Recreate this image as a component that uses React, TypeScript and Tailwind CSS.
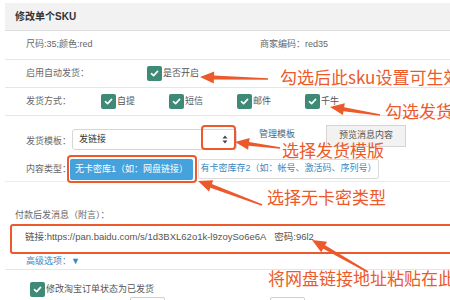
import React from "react";

const ORANGE = "#ec5a2c";

function Check() {
  return (
    <span className="inline-flex h-[15px] w-[15px] shrink-0 items-center justify-center rounded-[2px] bg-[#3f8a77]">
      <svg width="9" height="9" viewBox="0 0 10 10">
        <path
          d="M1.6 5.2 L4 7.4 L8.4 2.6"
          stroke="white"
          strokeWidth="1.8"
          fill="none"
          strokeLinecap="round"
          strokeLinejoin="round"
        />
      </svg>
    </span>
  );
}

// tip at (tx, ty), tail at (fx, fy)
function Arrow({ tx, ty, fx, fy }: { tx: number; ty: number; fx: number; fy: number }) {
  const dx = tx - fx;
  const dy = ty - fy;
  const len = Math.hypot(dx, dy);
  const ux = dx / len;
  const uy = dy / len;
  const px = -uy;
  const py = ux;
  const head = 14;
  const hw = 6;
  const bx = tx - ux * head;
  const by = ty - uy * head;
  const p = (x: number, y: number) => `${x.toFixed(1)},${y.toFixed(1)}`;
  const pts = [
    p(fx + px * 0.8, fy + py * 0.8),
    p(bx + px * 2, by + py * 2),
    p(bx + px * hw, by + py * hw),
    p(tx, ty),
    p(bx - px * hw, by - py * hw),
    p(bx - px * 2, by - py * 2),
    p(fx - px * 0.8, fy - py * 0.8),
  ].join(" ");
  return <polygon points={pts} fill={ORANGE} />;
}

function Note({ left, top, children }: { left: number; top: number; children: React.ReactNode }) {
  return (
    <span
      className="absolute whitespace-nowrap text-[17px] leading-none text-[#ec5a2c]"
      style={{ left, top, fontFamily: '"Noto Sans CJK SC", sans-serif' }}
    >
      {children}
    </span>
  );
}

export default function App() {
  return (
    <div
      className="relative h-[300px] w-[450px] overflow-hidden bg-white text-[9px] text-[#666]"
      style={{ fontFamily: '"Liberation Sans", "Noto Sans CJK SC", sans-serif' }}
    >
      <div className="pl-[5px] pt-[3px]">
        {/* header */}
        <div className="flex h-[28px] items-center border-b border-[#dedede] bg-[#f2f2f2] pl-[10px] text-[10px] font-bold text-[#333]">
          修改单个SKU
        </div>

        <div className="flex h-[29px] items-center border-b border-[#e6e6e6] pl-[21px]">
          <span className="w-[234px]">尺码:35;颜色:red</span>
          <span>商家编码：red35</span>
        </div>

        <div className="flex h-[28px] items-center border-b border-[#e6e6e6] pl-[21px]">
          <span className="w-[121px]">启用自动发货：</span>
          <Check />
          <span className="ml-[1px] text-[#555]">是否开启</span>
        </div>

        <div className="flex h-[28px] items-center border-b border-[#e6e6e6] pl-[21px]">
          <span className="w-[75px]">发货方式：</span>
          {["自提", "短信", "邮件", "千牛"].map((t) => (
            <span key={t} className="flex w-[68px] items-center">
              <Check />
              <span className="ml-[1px] text-[#555]">{t}</span>
            </span>
          ))}
        </div>

        {/* template */}
        <div className="flex h-[38px] items-start pl-[21px]">
          <span className="mt-[19px] w-[46px] shrink-0 whitespace-nowrap">发货模板：</span>
          <div className="mt-[13px] flex h-[21px] w-[165px] shrink-0 items-center justify-between rounded-[3px] border border-[#d6d6d6] bg-white pl-[6px] pr-[8px] text-[#333]">
            <span>发链接</span>
            <svg width="6" height="9" viewBox="0 0 6 9">
              <path d="M3 0.5 L5.5 3.5 H0.5 Z M3 8.5 L5.5 5.5 H0.5 Z" fill="#444" />
            </svg>
          </div>
          <span className="ml-[22px] mt-[12px] w-[36px] shrink-0 whitespace-nowrap text-[#4d6680]">管理模板</span>
          <div className="ml-[31px] mt-[9px] flex h-[22px] w-[80px] shrink-0 items-center justify-center border border-[#d4d4d4] bg-[#f2f2f2] text-[#555]">
            预览消息内容
          </div>
        </div>

        {/* content type */}
        <div className="flex h-[28px] items-start border-b border-[#ececec] pl-[21px]">
          <span className="mt-[9px] w-[44px] shrink-0 whitespace-nowrap">内容类型：</span>
          <div className="mt-[5px] flex h-[21px] w-[123px] shrink-0 items-center justify-center whitespace-nowrap rounded-[2px] bg-[#45a2dc] text-white">
            无卡密库1（如：网盘链接）
          </div>
          <div className="ml-[5px] mt-[5px] flex h-[20px] w-[181px] shrink-0 items-center justify-center whitespace-nowrap rounded-[2px] border border-[#dcdcdc] bg-white text-[#3a88c0]">
            有卡密库存2（如：帐号、激活码、序列号）
          </div>
        </div>

        {/* message */}
        <div className="pl-[10px] pt-[29px] leading-none">付款后发消息（附言）：</div>
        <div className="ml-[5px] mt-[4px] h-[30px] w-[470px] rounded-[3px] border-2 border-[#ec5a2c] pl-[13px] pt-[4px] text-[9.5px] text-[#555]">
          链接:https://pan.baidu.com/s/1d3BXL62o1k-l9zoySo6e6A&nbsp;&nbsp;&nbsp;密码:96l2
        </div>

        <div className="flex h-[16px] items-center border-b border-[#e6e6e6] pl-[21px] text-[#3a88c0]">
          高级选项：▼
        </div>

        <div className="flex h-[27px] items-center pl-[25px] pt-[12px]">
          <Check />
          <span className="ml-[1px] text-[#555]">修改淘宝订单状态为已发货</span>
        </div>

        <div className="flex pl-[125px]">
          <div className="h-[20px] w-[35px] rounded-[2px] border border-[#d0d0d0]" />
          <div className="ml-[105px] h-[20px] w-[35px] rounded-[2px] border border-[#d0d0d0]" />
        </div>
      </div>

      {/* annotations */}
      <div className="absolute left-[201px] top-[125px] h-[25px] w-[35px] rounded-[4px] border-2 border-[#ec5a2c]" />
      <div className="absolute left-[67px] top-[155px] h-[28px] w-[130px] rounded-[4px] border-2 border-[#ec5a2c]" />

      <svg className="pointer-events-none absolute left-0 top-0" width="450" height="300">
        <Arrow tx={200} ty={77} fx={268} fy={79} />
        <Arrow tx={330} ty={107} fx={380} fy={115} />
        <Arrow tx={235} ty={142} fx={280} fy={148} />
        <Arrow tx={198} ty={181} fx={262} fy={205} />
        <Arrow tx={312} ty={240} fx={368} fy={272} />
      </svg>

      <Note left={280} top={68}>勾选后此sku设置可生效</Note>
      <Note left={385} top={102}>勾选发货方式</Note>
      <Note left={282} top={141}>选择发货模版</Note>
      <Note left={267} top={188}>选择无卡密类型</Note>
      <Note left={268} top={269}>将网盘链接地址粘贴在此处</Note>
    </div>
  );
}
